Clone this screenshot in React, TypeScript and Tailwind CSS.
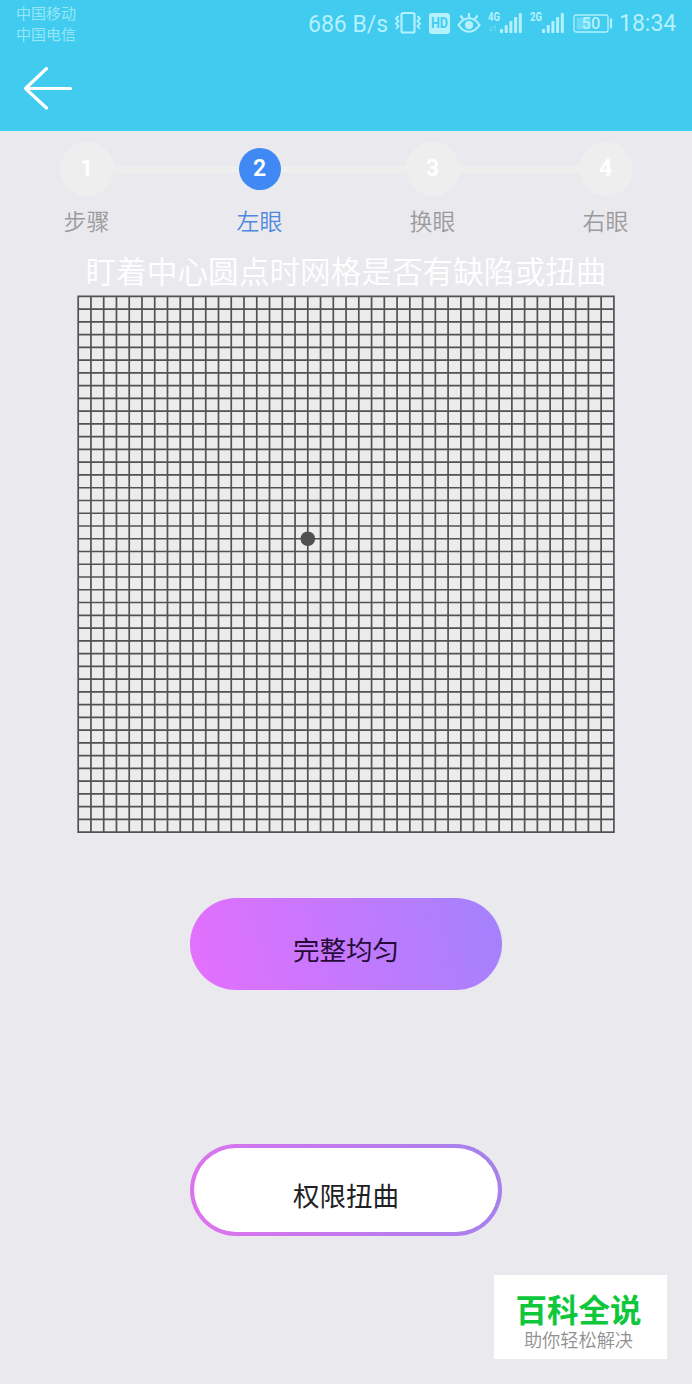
const STEPS = ['步骤', '左眼', '换眼', '右眼'];
const CURRENT = 1;

const CELLS = 42;
const CELL = 12.755;
const SIDE = CELLS * CELL;

function Signal({ label, faint }: { label: string; faint?: boolean }) {
  return (
    <svg className="overflow-visible" width="36" height="24" viewBox="0 0 36 24" fill="currentColor">
      <text x="0" y="10" fontSize="12" fontWeight="700" fontFamily="Roboto, sans-serif" textLength="12" lengthAdjust="spacingAndGlyphs">{label}</text>
      {faint && <path d="M3 15v5M1.5 18.5 3 20l1.500-1.500M7 20v-5M5.500 16.500 7 15l1.500 1.500" fill="none" stroke="currentColor" opacity=".4" />}
      {[0, 1, 2, 3, 4].map((i) => (
        <rect key={i} x={12 + i * 4.7} y={18 - i * 4} width="3" height={4 + i * 4} rx="0.8" />
      ))}
    </svg>
  );
}

function StatusBar() {
  return (
    <div className="flex h-[46px] items-start justify-between pr-[15px] pl-4 text-[#b4f1fd]">
      <div className="pt-[2px] text-[15px] leading-[21px] text-[#95e7f9]">
        <div>中国移动</div>
        <div>中国电信</div>
      </div>
      <div className="flex h-[46px] items-center font-[Roboto,sans-serif] text-[24px]">
        <span className="w-[81px] whitespace-nowrap pt-[3px] text-[23px] leading-[44px]">686 B/s</span>
        <svg className="ml-[5px]" width="28" height="24" viewBox="0 0 28 24" fill="none" stroke="currentColor" strokeWidth="2">
          <rect x="7.500" y="2" width="13" height="19.500" rx="1.500" strokeWidth="2.200" />
          <path d="M4.500 5 2 7.500 4.500 10 2 12.500 4.500 15 2 18M23.500 5l2.500 2.500-2.500 2.500 2.500 2.500-2.500 2.500 2.500 3" strokeWidth="1.800" />
        </svg>
        <span className="ml-[7px] flex h-[21px] w-[21px] items-center justify-center rounded-[3px] bg-[#b4f1fd] text-[14px] font-bold text-[#40cbef]">
          <span className="scale-x-90">HD</span>
        </span>
        <svg className="ml-[7px]" width="24" height="24" viewBox="0 0 24 24" fill="none" stroke="currentColor" strokeWidth="2.200">
          <path d="M1.500 14c6-9 15-9 21 0-6 9-15 9-21 0Z" />
          <path d="M12 7V2M6 8 3.500 4.500M18 8l2.500-3.500" />
          <circle cx="12" cy="14" r="4.200" fill="currentColor" stroke="none" />
        </svg>
        <span className="ml-[7px]"><Signal label="4G" faint /></span>
        <span className="ml-[6px]"><Signal label="2G" /></span>
        <svg className="mt-px ml-[7px]" width="40" height="20" viewBox="0 0 40 20" fill="none" stroke="currentColor">
          <rect x="1" y="1" width="34" height="17" rx="2" strokeWidth="1.300" />
          <rect x="3.500" y="3.500" width="14" height="12" fill="currentColor" stroke="none" opacity=".4" />
          <path d="M38 4.500v10" strokeWidth="2.200" />
          <text x="18" y="15.300" textAnchor="middle" fontSize="16.500" fontWeight="500" fontFamily="Roboto, sans-serif" fill="currentColor" stroke="none">50</text>
        </svg>
        <span className="ml-[6px] w-[58px] whitespace-nowrap pt-[3px] text-[23px]">18:34</span>
      </div>
    </div>
  );
}

function Stepper() {
  return (
    <div className="grid grid-cols-4">
      {STEPS.map((name, i) => {
        const active = i === CURRENT;
        return (
          <div key={name} className="flex flex-col items-center">
            <div className="flex h-[54px] w-full items-center">
              <div className={`h-[7px] flex-1 ${i > 0 ? 'bg-[#eeeeef]' : ''}`} />
              <div className={`flex shrink-0 items-center justify-center rounded-full font-[Roboto,sans-serif] text-[23px] font-semibold text-white ${active ? 'h-[42px] w-[42px] bg-[#4089f5]' : 'h-[54px] w-[54px] bg-[#eeeeef]'}`}>{i + 1}</div>
              <div className={`h-[7px] flex-1 ${i < STEPS.length - 1 ? 'bg-[#eeeeef]' : ''}`} />
            </div>
            <div className={`mt-[7px] text-[23px] leading-[34px] font-[350] ${active ? 'text-[#4f88e2]' : 'text-[#9a9a9c]'}`}>{name}</div>
          </div>
        );
      })}
    </div>
  );
}

function AmslerGrid() {
  const lines = Array.from({ length: CELLS + 1 }, (_, i) => 1 + i * CELL);
  return (
    <svg className="mx-auto block" width="538" height="538" viewBox="0 0 538 538">
      <g transform="translate(.2 .4)">
        <rect x="1" y="1" width={SIDE} height={SIDE} fill="#ececed" />
        <path d={lines.map((p) => `M${p} .2V${SIDE + 1.8}M.2 ${p}H${SIDE + 1.8}`).join('')} stroke="#525254" strokeWidth="1.700" />
        <circle cx={1 + 18 * CELL} cy={1 + 19 * CELL} r="7.300" fill="#505052" />
      </g>
    </svg>
  );
}

export default function App() {
  return (
    <main className="flex h-[1384px] w-[692px] flex-col overflow-hidden bg-[#eaeaee] font-['Noto_Sans_CJK_SC',sans-serif]">
      <header className="h-[131px] shrink-0 bg-[#40cbef]">
        <StatusBar />
        <button className="mt-[18px] ml-[22px] block text-white" aria-label="返回">
          <svg width="52" height="48" viewBox="0 0 52 48" fill="none" stroke="currentColor" strokeWidth="3.200" strokeLinecap="round" strokeLinejoin="round">
            <path d="M24.500 4.500 3.500 24.500l21 19.500M3.500 24.500H48.500" />
          </svg>
        </button>
      </header>

      <section className="pt-[11px]">
        <Stepper />
        <p className="mt-[11px] h-[47px] text-center text-[30.650px] leading-[44px] font-[350] whitespace-nowrap text-white">盯着中心圆点时网格是否有缺陷或扭曲</p>
        <AmslerGrid />
      </section>

      <div className="mt-[65px] flex flex-col items-center gap-[154px] text-[26.500px] text-[#212123]">
        <button className="h-[92px] w-[312px] rounded-full bg-[linear-gradient(75deg,#e170fd_5%,#a681fe_95%)] pt-[10px] text-[#240b38]">完整均匀</button>
        <div className="h-[92px] w-[312px] rounded-full bg-[linear-gradient(75deg,#dc73ee_5%,#a681ec_95%)] p-[4px]">
          <button className="h-full w-full rounded-full bg-white pt-[10px]">权限扭曲</button>
        </div>
      </div>

      <div className="mt-[39px] mr-[25px] flex h-[84px] w-[173px] flex-col items-center self-end bg-white pt-[12px] pr-[4px]">
        <div className="text-[31.500px] leading-[42px] font-bold text-[#0fc73b]">百科全说</div>
        <div className="mt-px text-[18.200px] leading-[18px] font-[350] text-[#909090]">助你轻松解决</div>
      </div>
    </main>
  );
}
